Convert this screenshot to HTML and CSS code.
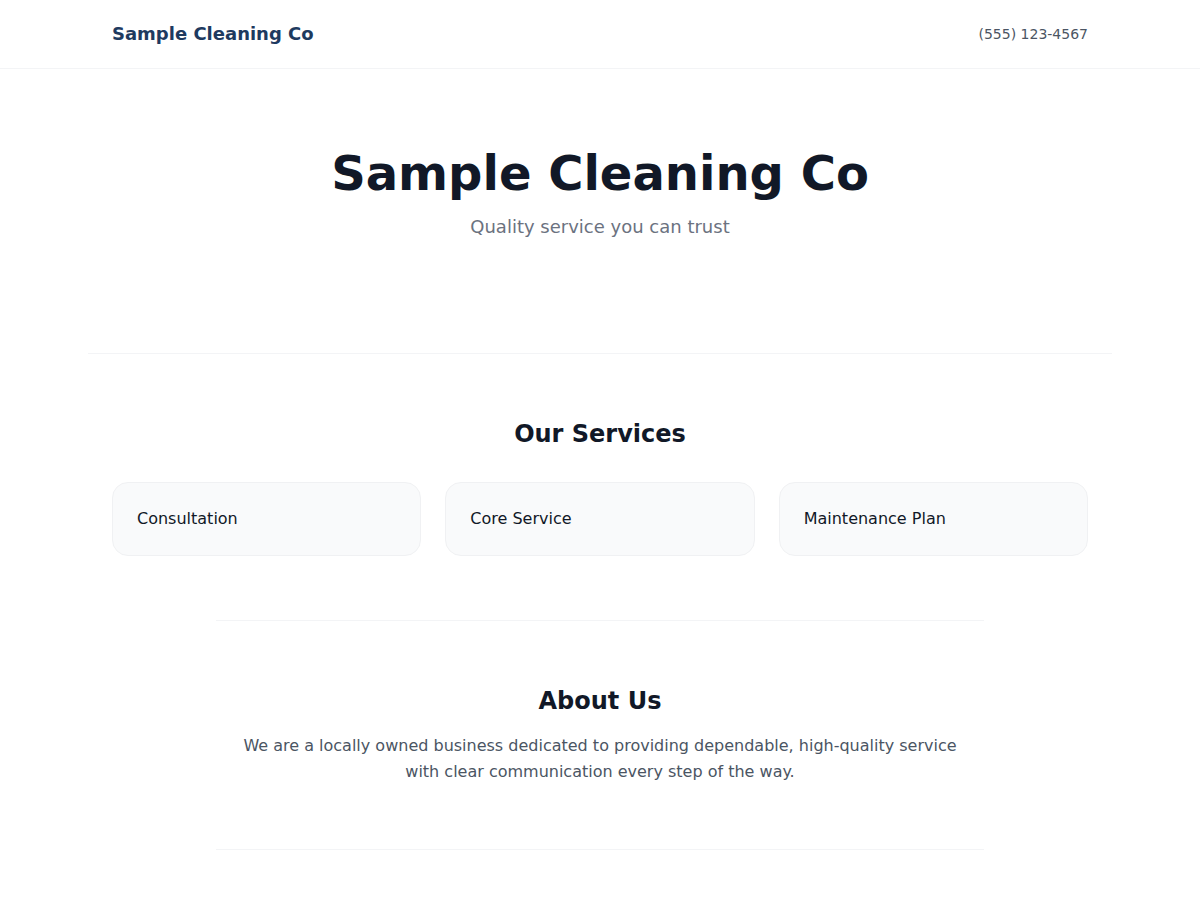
FILE: index.html
```html
<!DOCTYPE html>
<html lang="en">
<head>
    <meta charset="UTF-8">
    <meta name="viewport" content="width=device-width, initial-scale=1.0">
    <title>Sample Cleaning Co</title>
    <link rel="stylesheet" href="styles.css">
</head>
<body>
    <header class="site-header">
        <div class="header-inner">
            <div class="brand">Sample Cleaning Co</div>
            <a href="tel:5551234567" class="phone">(555) 123-4567</a>
        </div>
    </header>

    <main>
        <section class="hero">
            <h1>Sample Cleaning Co</h1>
            <p class="tagline">Quality service you can trust</p>
        </section>

        <section class="services">
            <h2>Our Services</h2>
            <div class="service-grid">
                <div class="service-card">Consultation</div>
                <div class="service-card">Core Service</div>
                <div class="service-card">Maintenance Plan</div>
            </div>
        </section>

        <section class="about">
            <h2>About Us</h2>
            <p>We are a locally owned business dedicated to providing dependable, high-quality service with clear communication every step of the way.</p>
        </section>
    </main>
</body>
</html>
```

FILE: styles.css
```css
* {
    margin: 0;
    padding: 0;
    box-sizing: border-box;
}

body {
    font-family: 'DejaVu Sans', Verdana, sans-serif;
    background: #ffffff;
    color: #111827;
}

/* Header */
.site-header {
    border-bottom: 1px solid #f3f4f6;
}

.header-inner {
    max-width: 1024px;
    margin: 0 auto;
    padding: 20px 24px;
    display: flex;
    justify-content: space-between;
    align-items: center;
}

.brand {
    font-size: 18px;
    line-height: 28px;
    font-weight: bold;
    color: #1e3a5f;
}

.phone {
    font-size: 14px;
    color: #4b5563;
    text-decoration: none;
}

/* Hero */
.hero {
    max-width: 1024px;
    margin: 0 auto;
    padding: 80px 24px 112px;
    text-align: center;
}

.hero h1 {
    font-size: 48px;
    line-height: 48px;
    font-weight: bold;
    color: #111827;
}

.tagline {
    margin-top: 16px;
    font-size: 18px;
    line-height: 28px;
    color: #6b7280;
}

/* Sections */
h2 {
    font-size: 24px;
    line-height: 32px;
    font-weight: bold;
    text-align: center;
    color: #111827;
}

.services {
    max-width: 1024px;
    margin: 0 auto;
    padding: 64px 24px;
    border-top: 1px solid #f3f4f6;
}

.service-grid {
    margin-top: 32px;
    display: grid;
    grid-template-columns: repeat(3, 1fr);
    gap: 24px;
}

.service-card {
    background: #f9fafb;
    border: 1px solid #f0f1f3;
    border-radius: 16px;
    padding: 24px;
    font-size: 16px;
    line-height: 24px;
    color: #111827;
}

.about {
    max-width: 768px;
    margin: 0 auto;
    padding: 64px 24px;
    border-top: 1px solid #f3f4f6;
    border-bottom: 1px solid #f3f4f6;
    text-align: center;
}

.about p {
    margin-top: 16px;
    font-size: 16px;
    line-height: 26px;
    color: #4b5563;
}
```
